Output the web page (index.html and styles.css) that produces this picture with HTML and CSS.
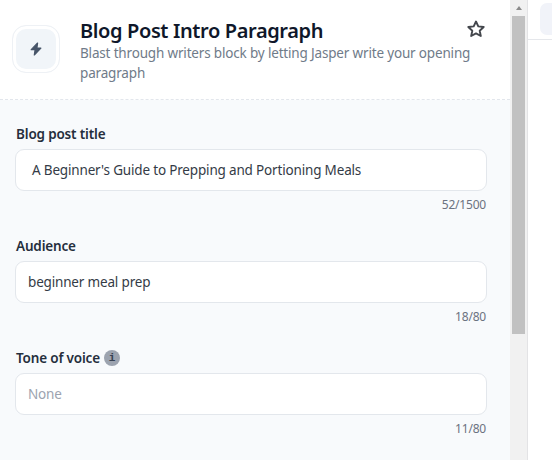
FILE: index.html
```html
<!DOCTYPE html>
<html lang="en">
<head>
  <meta charset="UTF-8">
  <title>Blog Post Intro Paragraph</title>
  <link rel="stylesheet" href="styles.css">
</head>
<body>
  <div class="app">
    <div class="panel">
      <header class="header">
        <div class="icon-box">
          <svg width="14" height="16" viewBox="0 0 14 16">
            <path d="M8.600 2 2.200 8.700h3.900L5.300 14l6.600-6.900H7.900z" fill="#475569" stroke="#475569" stroke-width="1.200" stroke-linejoin="round"/>
          </svg>
        </div>
        <div class="heading">
          <h1>Blog Post Intro Paragraph</h1>
          <p>Blast through writers block by letting Jasper write your opening<br>paragraph</p>
        </div>
        <svg class="star" width="20" height="20" viewBox="0 0 20 20">
          <path d="M10 2.500l2.300 4.900 5.400.6-4 3.700 1.100 5.300-4.800-2.600L5.200 17l1.100-5.300-4-3.700 5.400-.6z" fill="none" stroke="#44474d" stroke-width="1.900" stroke-linejoin="round"/>
        </svg>
      </header>

      <main class="form">
        <div class="field">
          <div class="label">Blog post title</div>
          <div class="input indented">A Beginner's Guide to Prepping and Portioning Meals</div>
          <div class="count">52/1500</div>
        </div>
        <div class="field">
          <div class="label">Audience</div>
          <div class="input">beginner meal prep</div>
          <div class="count">18/80</div>
        </div>
        <div class="field">
          <div class="label">Tone of voice<span class="info">i</span></div>
          <div class="input placeholder">None</div>
          <div class="count">11/80</div>
        </div>
      </main>
    </div>

    <div class="scrollbar">
      <div class="arrow"></div>
      <div class="thumb"></div>
    </div>

    <div class="editor">
      <div class="toolbar"><div class="tool"></div></div>
    </div>
  </div>
</body>
</html>
```
FILE: styles.css
```css
* {
  box-sizing: border-box;
}

body {
  margin: 0;
  overflow: hidden;
  font-family: "Noto Sans", sans-serif;
  background: #fff;
}

.app {
  display: flex;
  width: 552px;
  height: 460px;
}

.panel {
  width: 510px;
  background: #f8fafc;
}

.header {
  display: flex;
  height: 100px;
  padding: 19px 24px 0 12px;
  background: #fff;
  border-bottom: 1px dashed #e2e6ec;
}

.icon-box {
  display: flex;
  flex: none;
  align-items: center;
  justify-content: center;
  width: 48px;
  height: 48px;
  margin-top: 6px;
  border: 1px solid #eef1f5;
  border-radius: 14px;
  background: #f1f5f9;
  box-shadow: inset 0 0 0 3px #fff;
}

.heading {
  width: 386px;
  margin-left: 20px;
  padding-top: 1px;
  white-space: nowrap;
}

h1 {
  margin: -2px 0 0;
  font-size: 20px;
  line-height: 25px;
  font-weight: 600;
  letter-spacing: -0.38px;
  color: #0f172a;
}

p {
  margin: 0;
  font-size: 13.5px;
  line-height: 20px;
  letter-spacing: -0.17px;
  color: #707b89;
}

.star {
  flex: none;
}

.form {
  padding: 24px 23px 0 15px;
}

.field {
  height: 112px;
}

.label {
  display: flex;
  align-items: center;
  height: 20px;
  margin-bottom: 5px;
  padding-left: 1px;
  font-size: 13.5px;
  font-weight: 600;
  letter-spacing: -0.17px;
  color: #252e3c;
}

.info {
  width: 16px;
  height: 16px;
  margin-left: 4px;
  border-radius: 50%;
  background: #9ca3af;
  color: #374151;
  font: bold 11px/16px "Liberation Mono", monospace;
  text-align: center;
  letter-spacing: 0;
}

.input {
  display: flex;
  align-items: center;
  height: 42px;
  padding: 0 12px;
  border: 1px solid #e3e7ec;
  border-radius: 9px;
  background: #fff;
  font-size: 13.5px;
  letter-spacing: -0.17px;
  color: #343b46;
  white-space: nowrap;
}

.indented {
  padding-left: 16px;
}

.placeholder {
  color: #9ca3af;
}

.count {
  margin-top: 4px;
  padding-right: 1px;
  font-size: 12px;
  line-height: 20px;
  letter-spacing: -0.2px;
  color: #6b7280;
  text-align: right;
}

.scrollbar {
  display: flex;
  flex-direction: column;
  align-items: center;
  width: 18px;
  background: #f1f1f1;
  border-right: 1px solid #e3e3e5;
}

.arrow {
  margin: 6px 0 6px;
  border: 3.5px solid transparent;
  border-top: 0;
  border-bottom: 4px solid #8b8b8b;
}

.thumb {
  width: 13px;
  height: 318px;
  background: #c1c1c1;
}

.editor {
  flex: 1;
  overflow: hidden;
  background: #fff;
}

.toolbar {
  height: 40px;
  padding: 3px 0 0 12px;
  border-bottom: 1px solid #e5e7eb;
}

.tool {
  width: 32px;
  height: 32px;
  border-radius: 7px;
  background: #f1f3f9;
}
```
